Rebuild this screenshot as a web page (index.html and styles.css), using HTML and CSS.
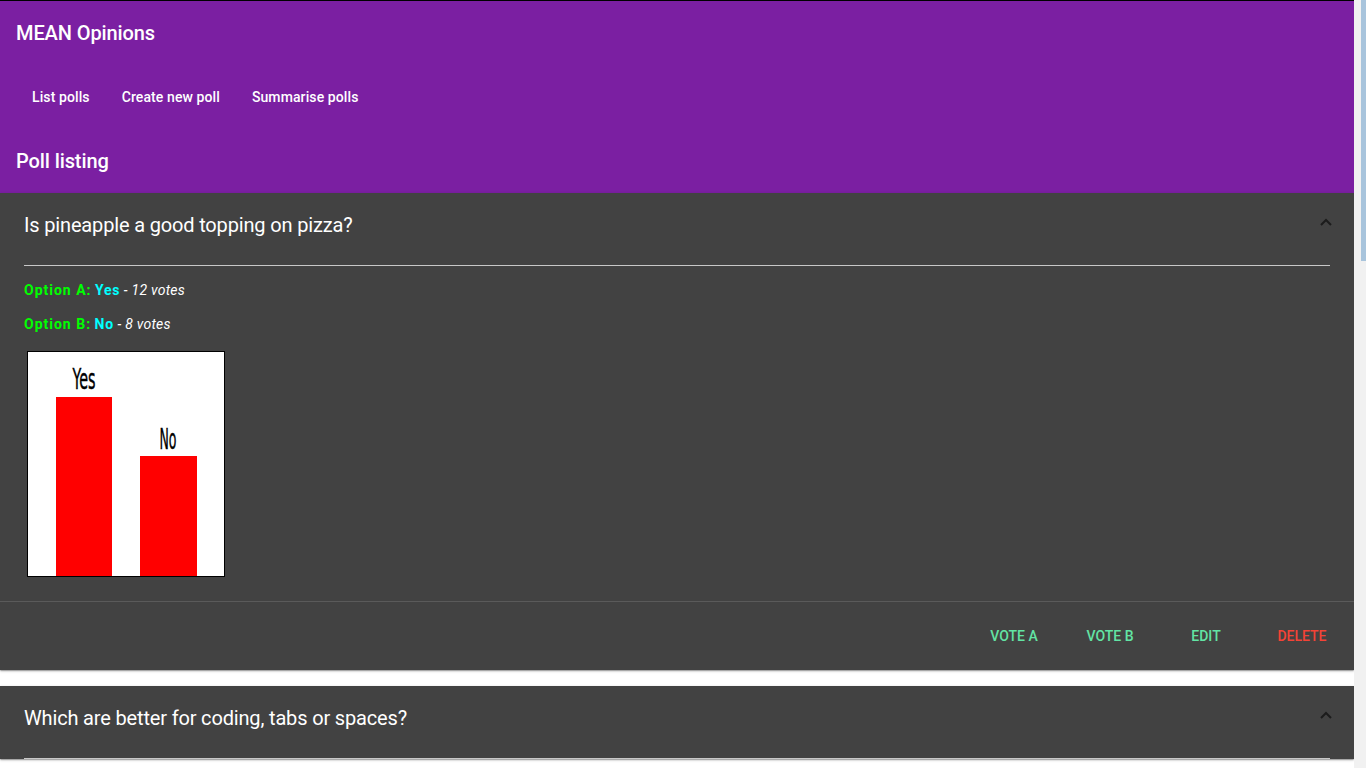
FILE: index.html
```html
<!DOCTYPE html>
<html lang="en">
<head>
<meta charset="utf-8">
<title>MEAN Opinions</title>
<link rel="stylesheet" href="styles.css">
</head>
<body>
<div class="app">
  <header class="toolbar">
    <div class="toolbar-row"><h1 class="brand">MEAN Opinions</h1></div>
    <nav class="toolbar-row nav">
      <a class="nav-link" href="#">List polls</a>
      <a class="nav-link" href="#">Create new poll</a>
      <a class="nav-link" href="#">Summarise polls</a>
    </nav>
    <div class="toolbar-row"><h2 class="page-title">Poll listing</h2></div>
  </header>

  <main class="polls">
    <section class="card">
      <div class="card-head">
        <div class="card-title-row">
          <h3 class="question">Is pineapple a good topping on pizza?</h3>
          <svg class="chevron" width="12" height="8" viewBox="0 0 12 8"><path d="M1 7 L6 2 L11 7" fill="none" stroke="#1c1c1c" stroke-width="2"/></svg>
        </div>
        <div class="rule"></div>
      </div>
      <div class="card-body">
        <p class="option"><span class="opt-label">Option A:</span> <span class="opt-name">Yes</span><span class="opt-votes"> - 12 votes</span></p>
        <p class="option"><span class="opt-label">Option B:</span> <span class="opt-name">No</span><span class="opt-votes"> - 8 votes</span></p>
        <div class="chart">
          <svg width="196" height="224" viewBox="0 0 196 224">
            <rect x="0" y="0" width="196" height="224" fill="#fff"/>
            <rect x="28" y="45" width="56" height="179" fill="#ff0000"/>
            <rect x="112" y="104" width="57" height="120" fill="#ff0000"/>
            <text class="chart-label" x="56" y="37" text-anchor="middle" textLength="23" lengthAdjust="spacingAndGlyphs">Yes</text>
            <text class="chart-label" x="140" y="97" text-anchor="middle" textLength="17" lengthAdjust="spacingAndGlyphs">No</text>
          </svg>
        </div>
      </div>
      <div class="card-actions">
        <button class="btn btn-ok">Vote A</button>
        <button class="btn btn-ok">Vote B</button>
        <button class="btn btn-ok">Edit</button>
        <button class="btn btn-warn">Delete</button>
      </div>
    </section>

    <section class="card">
      <div class="card-head">
        <div class="card-title-row">
          <h3 class="question">Which are better for coding, tabs or spaces?</h3>
          <svg class="chevron" width="12" height="8" viewBox="0 0 12 8"><path d="M1 7 L6 2 L11 7" fill="none" stroke="#1c1c1c" stroke-width="2"/></svg>
        </div>
        <div class="rule"></div>
      </div>
    </section>
  </main>
</div>
<div class="scrollbar" aria-hidden="true"><div class="scrollbar-thumb"></div></div>
</body>
</html>
```

FILE: styles.css
```css
html {
  background: #fff;
}
body {
  margin: 0 12px 0 0;
  font-family: Roboto, "Noto Sans", sans-serif;
  background: #fff;
  overflow: hidden;
  height: 768px;
}
.scrollbar {
  position: fixed;
  top: 0;
  right: 0;
  width: 12px;
  height: 100vh;
  background: #f1f1f1;
  display: flex;
  justify-content: flex-end;
}
.scrollbar-thumb {
  width: 5px;
  height: 261px;
  background: #a8c4dc;
}
.app {
  border-top: 1px solid #000;
}
.toolbar {
  background: #7b1fa2;
  color: #fff;
}
.toolbar-row {
  height: 64px;
  display: flex;
  align-items: center;
  padding: 0 16px;
}
.brand, .page-title {
  margin: 0;
  font-size: 20px;
  font-weight: 500;
  letter-spacing: -0.1px;
}
.nav-link {
  color: #fff;
  text-decoration: none;
  font-size: 14px;
  font-weight: 500;
  letter-spacing: 0.1px;
  padding: 0 16px;
  line-height: 36px;
}
.polls {
  display: flex;
  flex-direction: column;
  gap: 16px;
}
.card {
  background: #424242;
  color: #fff;
  box-shadow: 0 1px 3px rgba(0,0,0,0.2), 0 1px 1px rgba(0,0,0,0.14), 0 2px 1px -1px rgba(0,0,0,0.12);
}
.card-head {
  padding: 16px 24px 0;
}
.card-title-row {
  display: flex;
  justify-content: space-between;
  align-items: flex-start;
}
.question {
  margin: 0;
  font-size: 20px;
  font-weight: 400;
  line-height: 32px;
  letter-spacing: -0.16px;
}
.chevron {
  margin-top: 9px;
  margin-right: -2px;
}
.rule {
  margin-top: 24px;
  height: 1px;
  background: #c8c8c8;
}
.card-body {
  padding: 14px 24px 24px;
}
.option {
  margin: 0 0 14px;
  font-size: 14px;
  line-height: 20px;
}
.opt-label {
  color: #00ff00;
  font-weight: 700;
  letter-spacing: 1px;
}
.opt-name {
  color: #00ffff;
  font-weight: 700;
  letter-spacing: 0.7px;
}
.opt-votes {
  font-style: italic;
  color: #fff;
  letter-spacing: 0.25px;
}
.chart {
  width: fit-content;
  margin: 17px 0 0 3px;
  border: 1px solid #000;
}
.chart svg {
  display: block;
}
.chart-label {
  font-family: "Liberation Sans Narrow", "DejaVu Sans Condensed", "Liberation Sans", sans-serif;
  font-size: 28px;
  fill: #000;
  stroke: #000;
  stroke-width: 0.4;
}
.card-actions {
  border-top: 1px solid #5a5a5a;
  display: flex;
  justify-content: flex-end;
  gap: 8px;
  padding: 16px 8px;
}
.btn {
  min-width: 88px;
  height: 36px;
  background: transparent;
  border: 0;
  font-family: Roboto, "Noto Sans", sans-serif;
  font-size: 14px;
  font-weight: 500;
  text-transform: uppercase;
  padding: 0 6px;
  cursor: pointer;
}
.btn-ok {
  color: #62e4a4;
}
.btn-warn {
  color: #f44336;
}
```
